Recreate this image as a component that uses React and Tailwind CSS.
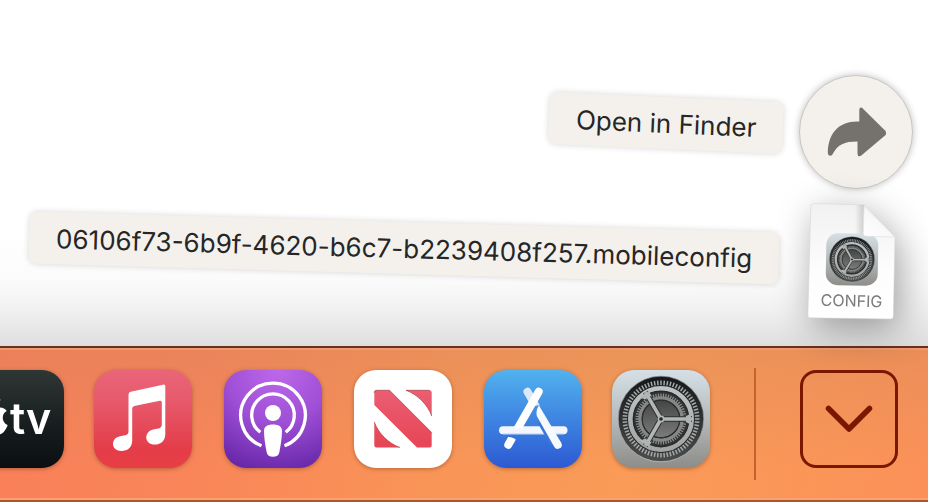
import React from "react";

const teeth = (count, r1, r2) =>
  Array.from({ length: count }, (_, i) => {
    const a = (i / count) * Math.PI * 2;
    const c = Math.cos(a);
    const s = Math.sin(a);
    return `M${49 + c * r1} ${49 + s * r1}L${49 + c * r2} ${49 + s * r2}`;
  }).join("");

const outerTeeth = teeth(72, 32, 38.5);
const innerTeeth = teeth(60, 22, 25.5);

function GearArt({ id }) {
  return (
    <g>
      <defs>
        <linearGradient id={`${id}-plate`} x1="0" y1="0" x2="0" y2="1">
          <stop offset="0" stopColor="#d5e0e6" />
          <stop offset="0.5" stopColor="#b5babb" />
          <stop offset="1" stopColor="#8d8d89" />
        </linearGradient>
        <linearGradient id={`${id}-well`} x1="0" y1="0" x2="0" y2="1">
          <stop offset="0" stopColor="#161718" />
          <stop offset="1" stopColor="#4b4c4c" />
        </linearGradient>
        <linearGradient id={`${id}-rim`} x1="0" y1="0" x2="0" y2="1">
          <stop offset="0" stopColor="#7d8284" />
          <stop offset="1" stopColor="#c8cac9" />
        </linearGradient>
        <linearGradient id={`${id}-disc`} x1="0" y1="0" x2="0" y2="1">
          <stop offset="0" stopColor="#444545" />
          <stop offset="1" stopColor="#7b7b7a" />
        </linearGradient>
        <linearGradient id={`${id}-metal`} x1="0" y1="0" x2="0" y2="1">
          <stop offset="0" stopColor="#bcc3c6" />
          <stop offset="1" stopColor="#a4a5a3" />
        </linearGradient>
      </defs>
      <rect width="98" height="98" rx="22" fill={`url(#${id}-plate)`} />
      <circle cx="49" cy="49" r="42.800" fill={`url(#${id}-well)`} stroke={`url(#${id}-rim)`} strokeWidth="0.7" />
      <path d={outerTeeth} stroke="#a3a8a9" strokeWidth="1.5" />
      <circle cx="49" cy="49" r="31" fill="#303131" />
      <path d={innerTeeth} stroke="#8b8c8c" strokeWidth="1.3" />
      <circle cx="49" cy="49" r="18.500" fill={`url(#${id}-disc)`} />
      <circle cx="49" cy="49" r="21" fill="none" stroke="#858686" strokeWidth="3.400" />
      <circle cx="49" cy="49" r="18.800" fill="none" stroke="#2c2d2d" strokeWidth="1.200" />
      <g fill="none" strokeLinejoin="round">
        <circle cx="49" cy="49" r="30.700" stroke="#242525" strokeWidth="6.5" />
        <circle cx="49" cy="49" r="30.700" stroke={`url(#${id}-metal)`} strokeWidth="4.6" />
        <path d="M49 49H80M49 49L33.500 22.200M49 49L33.500 75.800" stroke="#2d2e2e" strokeWidth="5.500" />
        <path d="M49 49H80M49 49L33.500 22.200M49 49L33.500 75.800" stroke="#b1b6b7" strokeWidth="3.600" />
      </g>
      <path d="M74 46Q77 45 79 42V56Q77 53 74 52ZM39.500 25.600Q37 23.500 37.500 20.500L27 28Q31 28 33 29.500ZM39.500 72.400Q37 74.500 37.500 77.500L27 70Q31 70 33 68.500Z" fill="#b0b4b4" />
      <circle cx="49" cy="49" r="3.400" fill="#b1b6b7" />
      <circle cx="49" cy="49" r="1.800" fill="#252626" />
    </g>
  );
}

function TvArt() {
  return (
    <g>
      <defs>
        <linearGradient id="tv" x1="0" y1="0" x2="0" y2="1">
          <stop offset="0" stopColor="#2f3735" />
          <stop offset="0.6" stopColor="#161c1d" />
          <stop offset="1" stopColor="#0c0f12" />
        </linearGradient>
      </defs>
      <rect x="2" width="98" height="98" rx="22" fill="url(#tv)" />
      <g transform="translate(13.600 26.500) scale(0.079)">
        <path
          fill="#fff"
          d="M318.700 268.700c-.2-36.700 16.400-64.400 50-84.800-18.800-26.900-47.200-41.700-84.700-44.600-35.500-2.800-74.300 20.700-88.500 20.700-15 0-49.400-19.700-76.400-19.700C63.300 141.200 4 184.800 4 273.500q0 39.300 14.400 81.200c12.800 36.700 59 126.700 107.200 125.200 25.200-.6 43-17.900 75.800-17.900 31.800 0 48.300 17.900 76.400 17.900 48.600-.7 90.400-82.500 102.600-119.300-65.200-30.700-61.700-90-61.700-91.900zM262.100 104.500c27.300-32.400 24.800-61.900 24-72.500-24.100 1.400-52 16.400-67.900 34.900-17.500 19.800-27.800 44.300-25.600 71.900 26.100 2 49.900-11.400 69.500-34.300z"
        />
      </g>
      <text x="46" y="64" fill="#fff" className="font-[Inter,sans-serif] text-[43px] font-semibold">tv</text>
    </g>
  );
}

function MusicArt() {
  return (
    <g>
      <defs>
        <linearGradient id="music" x1="0" y1="0" x2="0" y2="1">
          <stop offset="0" stopColor="#ea6579" />
          <stop offset="0.3" stopColor="#e75a6d" />
          <stop offset="0.8" stopColor="#e43d49" />
          <stop offset="1" stopColor="#e83e45" />
        </linearGradient>
      </defs>
      <rect width="98" height="98" rx="22" fill="url(#music)" />
      <path
        fill="#fff"
        d="M34.500 24.500Q34.500 22.300 36.700 21.800L69 14.700Q71.300 14.200 71.300 16.500V64C71.300 70.500 67 74.600 60.800 74.600C55.700 74.600 52.300 71.600 52.300 67.500C52.300 63 55.500 60 60.200 59.200L64.500 58.400Q67.800 57.800 67.800 54.500V32.300Q67.800 30.300 65.800 30.700L40.300 36Q38.200 36.500 38.200 38.500V70.500C38.200 77 33.800 81 27.500 81C22.400 81 19 78 19 74C19 69.500 22.300 66.800 27 66L31.300 65.300Q34.500 64.700 34.500 61.500Z"
      />
    </g>
  );
}

function PodcastsArt() {
  return (
    <g>
      <defs>
        <radialGradient id="pods" cx="0.55" cy="0" r="1.050">
          <stop offset="0" stopColor="#bd68ea" />
          <stop offset="0.5" stopColor="#9f50d6" />
          <stop offset="1" stopColor="#6827a9" />
        </radialGradient>
      </defs>
      <rect width="98" height="98" rx="22" fill="url(#pods)" />
      <g fill="none" stroke="#fff" strokeWidth="3.300">
        <path d="M37.500 75.700A32.300 32.300 0 1 1 60.500 75.700" />
        <path d="M36.300 62.300A21.300 21.300 0 1 1 61.700 62.300" />
      </g>
      <circle cx="49" cy="43" r="8" fill="#fff" />
      <path fill="#fff" d="M49 54.500C54.500 54.500 58 56.500 58 61C58 67 56.800 75 55.400 82C54.800 85.300 52.500 86.800 49 86.800S43.200 85.300 42.600 82C41.200 75 40 67 40 61C40 56.500 43.500 54.500 49 54.500Z" />
    </g>
  );
}

function NewsArt() {
  return (
    <g>
      <defs>
        <linearGradient id="news" x1="0" y1="20" x2="0" y2="78" gradientUnits="userSpaceOnUse">
          <stop offset="0" stopColor="#eb5e73" />
          <stop offset="1" stopColor="#e64554" />
        </linearGradient>
      </defs>
      <rect width="98" height="98" rx="22" fill="#fff" />
      <g fill="url(#news)">
        <path d="M22.500 20.300H35.500L77.700 62.500V75.300Q77.700 77.500 75.500 77.500H63L20.300 35V22.500Q20.300 20.300 22.500 20.300Z" />
        <path d="M52 20.300H75.500Q77.700 20.300 77.700 22.500V46C74 35 63 24 52 20.300Z" />
        <path d="M20.300 52C24 63 35 73.800 46 77.500H22.500Q20.300 77.500 20.300 75.300Z" />
      </g>
      <path d="M20.300 23V22.500Q20.300 20.300 22.500 20.300H35.500L77.700 62.500M77.700 46C74 35 63 24 52 20.300H75.500M20.300 52C24 63 35 73.800 46 77.500" fill="none" stroke="#a8404a" strokeWidth="0.7" />
    </g>
  );
}

function StoreArt() {
  return (
    <g>
      <defs>
        <linearGradient id="store" x1="0" y1="0" x2="0" y2="1">
          <stop offset="0" stopColor="#52b2ee" />
          <stop offset="0.45" stopColor="#4089e3" />
          <stop offset="1" stopColor="#2c59d2" />
        </linearGradient>
        <clipPath id="store-foot">
          <path d="M0 0H98V58H0ZM0 67L25 67Q31 67.500 34 72V98H0Z" />
        </clipPath>
        <clipPath id="store-head">
          <path d="M0 0H98V30L50 36H0Z" />
        </clipPath>
      </defs>
      <rect width="98" height="98" rx="22" fill="url(#store)" />
      <g fill="none" strokeLinecap="round" strokeWidth="8">
        <g clipPath="url(#store-head)">
          <path d="M43.500 21.800L52 36.600" stroke="#dce8f6" />
        </g>
        <path d="M19 60.300H79.500" stroke="#f3f7fd" />
        <path d="M19 63.800H79.500" stroke="#c6d9f0" strokeWidth="1" />
        <path d="M56 52L69 74.600" stroke="#3b78da" strokeWidth="5" strokeLinecap="butt" />
        <path d="M55 35.500Q51.500 40 52.800 46L70.200 76.800A4 4 0 0 0 77.200 72.800Z" fill="#f6f9fe" />
        <g clipPath="url(#store-foot)">
          <path d="M54.700 21.800L24.300 74.800" stroke="#fff" />
        </g>
      </g>
    </g>
  );
}

function SettingsArt() {
  return (
    <g transform="translate(-2 0)">
      <GearArt id="dock-gear" />
    </g>
  );
}

const apps = [
  { name: "TV", Art: TvArt },
  { name: "Music", Art: MusicArt },
  { name: "Podcasts", Art: PodcastsArt },
  { name: "News", Art: NewsArt },
  { name: "App Store", Art: StoreArt },
  { name: "System Preferences", Art: SettingsArt },
];

function DocumentIcon() {
  return (
    <svg viewBox="0 0 114 114" aria-hidden="true" className="size-[114px] shrink-0 overflow-visible drop-shadow-[5px_10px_18px_rgba(0,0,0,0.36)]">
      <defs>
        <linearGradient id="page" x1="0" y1="0" x2="0" y2="1">
          <stop offset="0" stopColor="#f1f1f1" />
          <stop offset="0.6" stopColor="#fdfdfd" />
          <stop offset="1" stopColor="#ffffff" />
        </linearGradient>
        <linearGradient id="fold" x1="0" y1="1" x2="0.6" y2="0.3">
          <stop offset="0" stopColor="#ffffff" />
          <stop offset="0.7" stopColor="#f8f8f8" />
          <stop offset="1" stopColor="#e6e6e6" />
        </linearGradient>
        <linearGradient id="crease" x1="0" y1="0" x2="1" y2="0">
          <stop offset="0" stopColor="#000" stopOpacity="0" />
          <stop offset="1" stopColor="#000" stopOpacity="0.16" />
        </linearGradient>
      </defs>
      <path d="M14.500 -1.500L65 0L96 32L94.300 111.500Q94.200 114 91.700 114L11.300 112.800Q8.800 112.700 8.900 110.200L11.800 1Q12 -1.500 14.500 -1.500Z" fill="url(#page)" stroke="#d0d0d0" strokeWidth="0.5" />
      <path d="M56 0L65 0L64 31H56Z" fill="url(#crease)" />
      <g transform="translate(27.500 28) rotate(1) scale(0.53)">
        <GearArt id="file-gear" />
      </g>
      <path d="M65 0L96 32L67 31.300Q64.300 31.200 64.300 28.500Z" fill="url(#fold)" stroke="#d8d8d8" strokeWidth="0.5" />
      <text x="52.500" y="101.500" textAnchor="middle" fill="#7b7b7b" transform="rotate(1.500 52 98)" className="font-[Inter,sans-serif] text-[16px]">CONFIG</text>
    </svg>
  );
}

const label =
  "rounded-lg bg-[#f4f1ed] px-[27px] pt-[11px] pb-[9px] text-[26px] leading-8 whitespace-nowrap text-[#262626] shadow-[0_0_6px_rgba(0,0,0,0.16)]";

export default function App() {
  return (
    <div className="flex min-h-screen flex-col overflow-hidden bg-white font-[Inter,sans-serif]">
      <main className="relative z-10 flex flex-1 flex-col items-end gap-4 bg-[linear-gradient(to_top,#dedede_0px,#f0f0f0_34px,#fbfbfb_66px,#ffffff_110px)] pt-[75px] pr-[15px] pb-[27px]">
        <button type="button" className="flex items-start gap-4">
          <span className={`${label} mt-[22px] rotate-[2.5deg]`}>Open in Finder</span>
          <span className="grid size-[114px] place-items-center rounded-full border border-[#c9c7c4] bg-[#f4f1ed] shadow-[0_0_7px_rgba(0,0,0,0.25)]">
            <svg viewBox="0 0 60 50" aria-hidden="true" className="h-[50px] w-[60px]">
              <path
                d="M36 0.800Q33.500 -0.300 33.300 3V14.500C13 13.500 2.500 26 1.800 45C1.700 49.500 5.500 49.800 7 46.500C12 37.500 18 34.500 31.500 34.500V46.500Q31.500 50.300 35 48.800L59.300 28.200Q61 26 59.300 23.800Z"
                fill="#75726d"
              />
            </svg>
          </span>
        </button>
        <button type="button" className="flex items-start gap-5">
          <span className={`${label} mt-[17px] rotate-[1.6deg]`}>06106f73-6b9f-4620-b6c7-b2239408f257.mobileconfig</span>
          <DocumentIcon />
        </button>
      </main>

      <nav aria-label="Dock" className="border-y-2 border-t-[#67331c] border-b-[#a9572d]">
        <div className="flex items-start justify-between border-y-2 border-t-[#f0986e] border-b-[#fba070] bg-[linear-gradient(to_bottom,rgba(190,130,95,0.25),rgba(255,150,90,0)_80%),linear-gradient(100deg,#f98059_0%,#f98559_22%,#f99557_48%,#fa9b57_68%,#fb9158_100%)] pt-5 pr-[30px] pb-[18px]">
          <div className="-ml-9 flex gap-8">
            {apps.map(({ name, Art }) => (
              <button key={name} type="button" aria-label={name} className="size-[98px] shrink-0">
                <svg viewBox="0 0 98 98" aria-hidden="true" className="size-full overflow-visible drop-shadow-[0_1px_2px_rgba(60,20,0,0.35)]">
                  <Art />
                </svg>
              </button>
            ))}
          </div>
          <div className="flex items-start gap-11">
            <div className="-mt-0.5 h-28 w-0.5 bg-[#c4632b]" />
            <button type="button" aria-label="Downloads" className="grid size-[98px] place-items-center rounded-2xl border-[3px] border-[#7a1700]">
              <svg viewBox="0 0 48 28" aria-hidden="true" className="h-7 w-12">
                <path d="M3.500 3.500L24 24L44.500 3.500" fill="none" stroke="#7a1700" strokeWidth="5.500" strokeLinecap="round" strokeLinejoin="round" />
              </svg>
            </button>
          </div>
        </div>
      </nav>
    </div>
  );
}
